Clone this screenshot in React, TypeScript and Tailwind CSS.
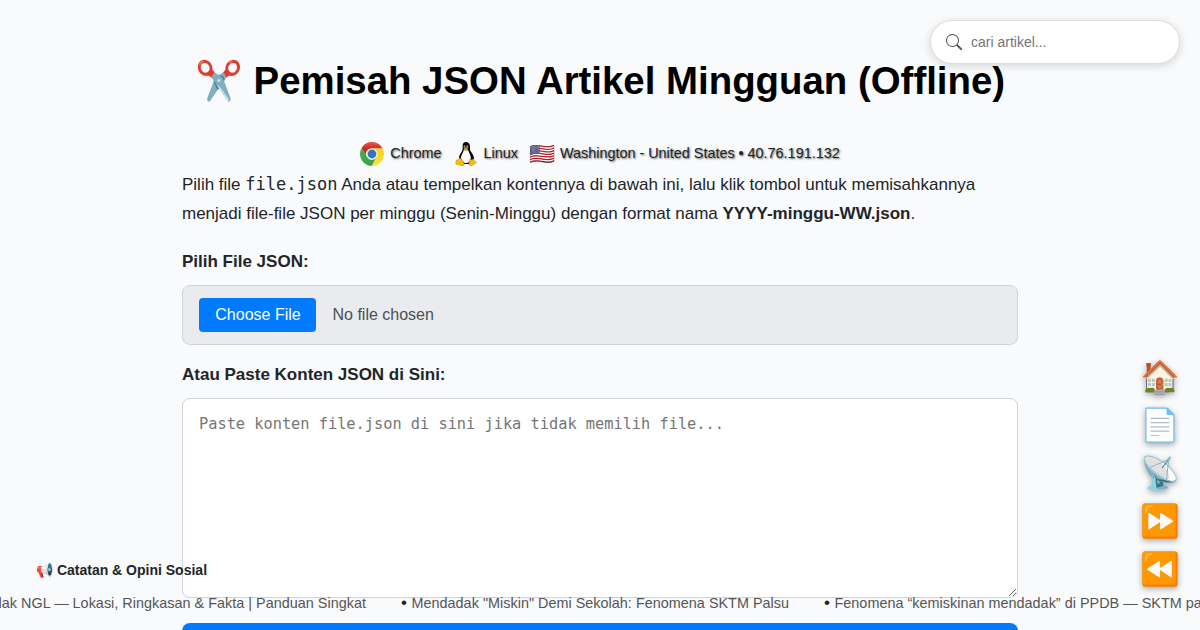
import React from "react";

function ChromeIcon() {
  return (
    <svg viewBox="0 0 48 48" className="h-6 w-6">
      <defs>
        <linearGradient id="cr" x1="24" y1="0" x2="24" y2="15" gradientUnits="userSpaceOnUse">
          <stop offset="0" stopColor="#e8574a" />
          <stop offset="1" stopColor="#c9281c" />
        </linearGradient>
        <linearGradient id="cy" x1="44" y1="14" x2="34" y2="44" gradientUnits="userSpaceOnUse">
          <stop offset="0" stopColor="#f9cf16" />
          <stop offset="1" stopColor="#fbe03a" />
        </linearGradient>
        <linearGradient id="cg" x1="4" y1="14" x2="22" y2="46" gradientUnits="userSpaceOnUse">
          <stop offset="0" stopColor="#4caf50" />
          <stop offset="1" stopColor="#3c9d45" />
        </linearGradient>
      </defs>
      <path fill="url(#cr)" d="M3.2 12A24 24 0 0 1 45.200 13H24a11 11 0 0 0-10.400 17Z" />
      <path fill="url(#cy)" d="M45.200 13A24 24 0 0 1 23 48l10.500-18.500A11 11 0 0 0 24 13Z" />
      <path fill="url(#cg)" d="M23 48A24 24 0 0 1 3.200 12l10.800 17.500a11 11 0 0 0 19.500 0Z" />
      <circle cx="24" cy="24" r="11" fill="#f1f1f1" />
      <circle cx="24" cy="24" r="8.8" fill="#3477b8" />
    </svg>
  );
}

function TuxIcon() {
  return (
    <svg viewBox="0 0 24 24" className="h-6 w-6">
      <path
        fill="#080808"
        d="M12 0C9.500 0 8.500 1.800 8.600 4.400c.2 3 0 3.700-1.400 6C5.400 12.700 4.600 15.500 5 18.500L8 22h8l4-3.500c.500-3.200-1-6.200-3-8.700-1.200-1.600-1-3-1-5.200C16 1.700 14.400 0 12 0Z"
      />
      <path
        fill="#fff"
        d="M9.700 8.200c-.4 2.200-2.600 4.400-2.700 7.300 0 2 1.500 3 2.500 4.500.8 1.300 4.300 1.300 5.500 0 1.500-1.600 2-3 1.700-5-.3-2.700-1.900-4.300-2.500-6.800Z"
      />
      <ellipse cx="10.500" cy="4.700" rx=".8" ry="1.200" fill="#ddd" />
      <ellipse cx="13.200" cy="4.700" rx="1" ry="1.300" fill="#ddd" />
      <circle cx="10.700" cy="5" r=".6" fill="#000" />
      <circle cx="12.900" cy="5" r=".65" fill="#000" />
      <path fill="#e8a90c" d="m9.400 7 2.200-1.400L14.300 7l-2.600 1.700Z" />
      <path
        fill="#f5bd0c"
        stroke="#806000"
        strokeWidth=".3"
        d="M5.800 16c1-.2 1.600 1 2.600 2.700 1 1.500 2.200 2.500 1.600 4-.7 1.700-2.400 1.300-4.200.5-1.500-.6-3.700-.4-4-1.200-.3-.7.4-1.700.2-2.900-.1-1.200.7-1 1.700-1.300.8-.3 1.200-1.600 2.100-1.800Zm10.100 1c.7.9 2.700.9 3.300-.3.800.2.800 1.300 1.300 2 .6.900 2 1.200 1.900 1.900-.1.700-2.200 1.300-3.400 2.400-1.500 1.200-3.600 1.200-4-.4-.3-1.500.6-3.800.9-5.600Z"
      />
    </svg>
  );
}

const actions = ["🏠", "📄", "📡", "⏩", "⏪"];

function Bullet() {
  return <span className="w-[5px] text-[17px] text-[#212529]">•</span>;
}

export default function App() {
  return (
    <div className="relative h-[630px] w-[1200px] overflow-hidden bg-[#f8fafc] font-['Liberation_Sans',sans-serif] text-[17px] leading-[28.9px] text-[#212529]">
      <main className="mx-auto flex w-[836px] flex-col pt-[49px]">
        <h1 className="text-center text-[38.4px] leading-16 font-bold whitespace-nowrap text-black">
          ✂️ Pemisah JSON Artikel Mingguan (Offline)
        </h1>

        <div className="mt-[29px] flex h-6 items-center justify-center text-[14.4px] leading-[22px] [text-shadow:1px_1px_2px_rgba(0,0,0,0.6)]">
          <ChromeIcon />
          <span className="mb-0.5 ml-1.5">Chrome</span>
          <span className="ml-3 flex"><TuxIcon /></span>
          <span className="mb-0.5 ml-1.5">Linux</span>
          <span className="ml-3 flex w-6 justify-center text-[21px] [text-shadow:none]">🇺🇸</span>
          <span className="mb-0.5 ml-1.5 whitespace-nowrap">Washington - United States • 40.76.191.132</span>
        </div>

        <p className="mt-[5px] h-[58px]">
          Pilih file <code className="font-['DejaVu_Sans_Mono',monospace] text-[17px] leading-none">file.json</code> Anda atau tempelkan
          kontennya di bawah ini, lalu klik tombol untuk memisahkannya menjadi file-file JSON per minggu
          (Senin-Minggu) dengan format nama <strong>YYYY-minggu-WW.json</strong>.
        </p>

        <div className="mt-[19px] h-[29px] font-bold">Pilih File JSON:</div>
        <div className="mt-2 flex h-[60px] items-center rounded-lg border border-[#ced4da] bg-[#e9ebee] px-4 text-[16px] leading-[18px] text-[#495057]">
          <button className="h-[34px] w-[117px] rounded-[4px] bg-[#007bff] pl-px text-white">Choose File</button>
          <span className="ml-[16.5px]">No file chosen</span>
        </div>

        <div className="mt-4 h-[29px] font-bold">Atau Paste Konten JSON di Sini:</div>
        <textarea
          className="mt-2 block h-[200px] w-full shrink-0 resize-y rounded-lg border border-[#ced4da] bg-white px-4 py-3 font-['DejaVu_Sans_Mono',monospace] text-[15.3px] leading-[26px] placeholder:text-[#757575]"
          placeholder="Paste konten file.json di sini jika tidak memilih file..."
        />
        <div className="mt-[25px] h-12 shrink-0 rounded-lg bg-[#007bff]" />
      </main>

      <label className="absolute top-5 right-5 flex h-11 w-[250px] items-center rounded-full border border-[#ddd] bg-white pl-[15px] shadow-[0_2px_8px_rgba(0,0,0,0.15)]">
        <svg viewBox="0 0 16 16" className="h-4 w-4" fill="#555">
          <path d="M11.742 10.344a6.500 6.500 0 1 0-1.397 1.398h-.001q.044.060.098.115l3.850 3.850a1 1 0 0 0 1.415-1.414l-3.850-3.850a1 1 0 0 0-.115-.1zM12 6.500a5.500 5.500 0 1 1-11 0 5.500 5.500 0 0 1 11 0" />
        </svg>
        <input
          className="ml-[9px] w-[190px] text-[14px] leading-5 outline-none placeholder:text-[#757575]"
          placeholder="cari artikel..."
        />
      </label>

      <nav className="absolute top-[353px] right-[22px] flex w-9 flex-col">
        {actions.map((icon) => (
          <button key={icon} className="flex h-12 items-center justify-center text-[32px] leading-none drop-shadow-[0_2px_3px_rgba(0,0,0,0.35)]">
            {icon}
          </button>
        ))}
      </nav>

      <div className="absolute top-[560px] left-9 text-[14px] leading-5 font-bold whitespace-nowrap">
        📢 Catatan &amp; Opini Sosial
      </div>

      <div className="absolute top-[593px] left-0 flex w-[1200px] overflow-hidden text-[14.4px] leading-5 whitespace-nowrap text-[#555]">
        <span className="flex w-[366px] shrink-0 justify-end tracking-[0.02px]">Mendadak NGL — Lokasi, Ringkasan &amp; Fakta | Panduan Singkat</span>
        <span className="ml-[35px] flex w-[388px] shrink-0 gap-[5.500px]"><Bullet /><span className="tracking-[0.02px]">Mendadak "Miskin" Demi Sekolah: Fenomena SKTM Palsu</span></span>
        <span className="ml-[35px] flex shrink-0 gap-[5.500px]"><Bullet /><span className="tracking-[0.02px]">Fenomena “kemiskinan mendadak” di PPDB — SKTM palsu</span></span>
      </div>
    </div>
  );
}
